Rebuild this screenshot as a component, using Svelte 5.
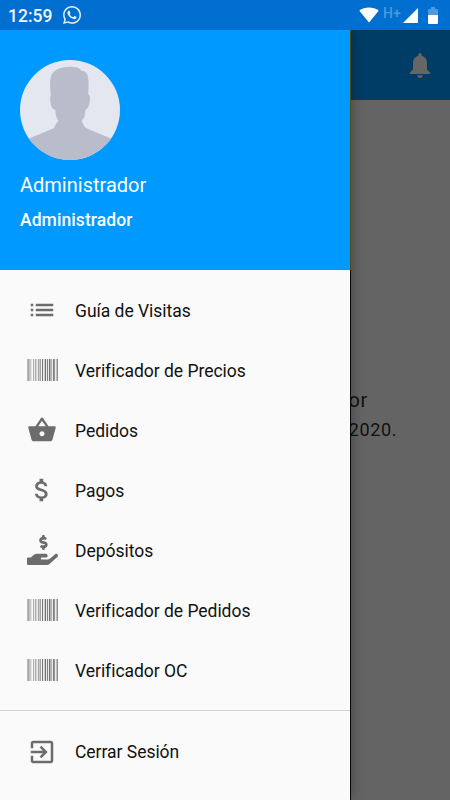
<script lang="ts">
	const items = [
		{ label: 'Guía de Visitas', icon: 'list' },
		{ label: 'Verificador de Precios', icon: 'barcode' },
		{ label: 'Pedidos', icon: 'basket' },
		{ label: 'Pagos', icon: 'money' },
		{ label: 'Depósitos', icon: 'deposit' },
		{ label: 'Verificador de Pedidos', icon: 'barcode' },
		{ label: 'Verificador OC', icon: 'barcode' }
	];

	// opacity of every 1px barcode line, left to right
	const bars = [
		0.45, 0.6, 0.4, 0.35, 0.15, 0, 0.55, 0.1, 0.55, 0.25, 0.1, 0.6, 0.35, 0.6, 0.05, 0.9,
		0.1, 0.3, 0.95, 0.1, 0.85, 0.1, 0.95, 0.5, 0.5, 0.1, 0.85, 0.7, 0.1, 0.4, 0.75
	];
</script>

{#snippet icon(name)}
	{#if name === 'barcode'}
		<svg class="icon" width="31" height="22" viewBox="0 0 31 22" shape-rendering="crispEdges">
			{#each bars as opacity, x}
				<rect {x} y="0" width="1" height="22" {opacity} />
			{/each}
		</svg>
	{:else if name === 'deposit'}
		<svg class="icon" width="31" height="30" viewBox="0 0 544 512" preserveAspectRatio="none">
			<path d="M257.6 144.3l50 14.3c3.6 1 6.1 4.4 6.1 8.1 0 4.6-3.8 8.4-8.4 8.4h-32.8c-3.6 0-7.1-.8-10.3-2.2-4.8-2.2-10.4-1.7-14.1 2l-17.5 17.5c-5.3 5.3-4.7 14.3 1.5 18.4 9.5 6.3 20.4 10.1 31.8 11.5V240c0 8.8 7.2 16 16 16h16c8.8 0 16-7.2 16-16v-17.6c30.3-3.6 53.3-31 49.3-63-2.9-23-20.7-41.3-42.9-47.7l-50-14.3c-3.6-1-6.1-4.4-6.1-8.1 0-4.6 3.8-8.4 8.4-8.4h32.8c3.6 0 7.1.8 10.3 2.2 4.8 2.2 10.4 1.7 14.1-2l17.5-17.5c5.3-5.3 4.7-14.3-1.5-18.4-9.5-6.3-20.4-10.1-31.8-11.5V16c0-8.8-7.2-16-16-16h-16c-8.8 0-16 7.2-16 16v17.6c-30.3 3.6-53.3 31-49.3 63 2.9 23 20.6 41.3 42.9 47.7zm276.3 183.8c-11.2-10.7-28.5-10-40.3 0L406.4 402c-10.7 9.1-24 14-37.8 14H256.9c-8.3 0-15.1-7.2-15.1-16s6.8-16 15.1-16h73.9c15.1 0 29-10.9 31.4-26.6 3.1-20-11.5-37.4-29.8-37.4H181.3c-25.5 0-50.2 9.3-69.9 26.1L67.5 384H15.1C6.8 384 0 391.2 0 400v96c0 8.8 6.8 16 15.1 16H352c13.7 0 27-4.9 37.8-14l142.8-121c14.4-12.1 15.5-35.3 1.3-48.9z" />
		</svg>
	{:else}
		<svg class="icon" width="30" height="30" viewBox="0 0 24 24">
			{#if name === 'list'}
				<path d="M3 13h2v-2H3v2zm0 4h2v-2H3v2zm0-8h2V7H3v2zm4 4h14v-2H7v2zm0 4h14v-2H7v2zM7 7v2h14V7H7z" />
			{:else if name === 'basket'}
				<path d="M17.21 9l-4.38-6.56c-.19-.28-.51-.42-.83-.42-.32 0-.64.14-.83.43L6.79 9H2c-.55 0-1 .45-1 1 0 .09.01.18.04.27l2.54 9.27c.23.84 1 1.46 1.92 1.46h13c.92 0 1.69-.62 1.93-1.46l2.54-9.27L23 10c0-.55-.45-1-1-1h-4.79zM9 9l3-4.4L15 9H9zm3 8c-1.1 0-2-.9-2-2s.9-2 2-2 2 .9 2 2-.9 2-2 2z" />
			{:else if name === 'money'}
				<path d="M11.8 10.9c-2.27-.59-3-1.2-3-2.15 0-1.09 1.01-1.85 2.7-1.85 1.78 0 2.44.85 2.5 2.1h2.21c-.07-1.72-1.12-3.3-3.21-3.81V3h-3v2.16c-1.94.42-3.5 1.68-3.5 3.61 0 2.31 1.91 3.46 4.7 4.13 2.5.6 3 1.48 3 2.41 0 .69-.49 1.79-2.7 1.79-2.06 0-2.87-.92-2.98-2.1h-2.2c.12 2.19 1.76 3.42 3.68 3.83V21h3v-2.15c1.95-.37 3.5-1.5 3.5-3.55 0-2.84-2.43-3.81-4.7-4.4z" />
			{:else if name === 'exit'}
				<path d="M10.09 15.59L11.5 17l5-5-5-5-1.41 1.41L12.67 11H3v2h9.67l-2.58 2.59zM19 3H5c-1.11 0-2 .9-2 2v4h2V5h14v14H5v-4H3v4c0 1.1.89 2 2 2h14c1.1 0 2-.9 2-2V5c0-1.1-.9-2-2-2z" />
			{/if}
		</svg>
	{/if}
{/snippet}

<div class="screen">
	<header class="status-bar">
		<span class="time">12:59</span>
		<svg class="whatsapp" width="18" height="18" viewBox="0 32 448 448">
			<path d="M380.9 97.1C339 55.1 283.2 32 223.9 32c-122.4 0-222 99.6-222 222 0 39.1 10.2 77.3 29.6 111L0 480l117.7-30.9c32.4 17.7 68.9 27 106.1 27h.1c122.3 0 224.1-99.6 224.1-222 0-59.3-25.2-115-67.1-157zm-157 341.6c-33.2 0-65.7-8.9-94-25.7l-6.7-4-69.8 18.3L72 359.2l-4.4-7c-18.5-29.4-28.2-63.3-28.2-98.2 0-101.7 82.8-184.5 184.6-184.5 49.3 0 95.6 19.2 130.4 54.1 34.8 34.9 56.2 81.2 56.1 130.5 0 101.8-84.9 184.6-186.6 184.6zm101.2-138.2c-5.5-2.8-32.8-16.2-37.9-18-5.1-1.9-8.8-2.8-12.5 2.8-3.7 5.6-14.3 18-17.6 21.8-3.2 3.7-6.5 4.2-12 1.4-32.6-16.3-54-29.1-75.5-66-5.7-9.8 5.7-9.1 16.3-30.3 1.8-3.7.9-6.9-.5-9.7-1.4-2.8-12.5-30.1-17.1-41.2-4.5-10.8-9.1-9.3-12.5-9.5-3.2-.2-6.9-.2-10.6-.2-3.7 0-9.7 1.4-14.8 6.9-5.1 5.6-19.4 19-19.4 46.3 0 27.3 19.9 53.7 22.6 57.4 2.8 3.7 39.1 59.7 94.8 83.8 35.2 15.2 49 16.5 66.6 13.9 10.7-1.6 32.8-13.4 37.4-26.4 4.6-13 4.6-24.1 3.2-26.4-1.3-2.5-5-3.9-10.5-6.6z" />
		</svg>
		<div class="signals">
			<svg class="wifi" width="20" height="16" viewBox="0 0 20 16">
				<path d="M.3 3.8C5.5-.5 14.5-.5 19.7 3.8L10 15.6z" />
			</svg>
			<span class="network">H+</span>
			<svg class="cell" width="15" height="15" viewBox="0 0 15 15">
				<path d="M15 0v15H0z" />
			</svg>
			<svg class="battery" width="10" height="17" viewBox="0 0 10 17">
				<path class="dim" d="M3 0h4v2H9q1 0 1 1v5H0V3q0-1 1-1h2z" />
				<path d="M0 8h10v8q0 1-1 1H1q-1 0-1-1z" />
			</svg>
		</div>
	</header>

	<main class="page">
		<div class="toolbar">
			<svg class="bell" width="20" height="25" viewBox="0 0 20 25">
				<path d="M10 0a1.7 1.7 0 0 0-1.7 1.7v1.1C5 3.6 3 6.5 3 10v6.5L0 19.500V21h20v-1.500L17 16.500V10c0-3.500-2-6.400-5.300-7.200V1.700A1.700 1.700 0 0 0 10 0zM7.300 22.300h5.400Q12.400 25 10 25T7.300 22.300z" />
			</svg>
		</div>
		<div class="message">
			<p class="name">Administrador</p>
			<p>2020.</p>
		</div>
	</main>

	<aside class="drawer">
		<div class="profile">
			<svg class="avatar" width="100" height="100" viewBox="0 0 100 100">
				<path d="M50 6.700C56 6.700 59 7.500 61.500 10.800C66 11.500 67.500 14 68 17C69 23 68.500 29 68.200 34Q70.500 35 69.800 40Q69.200 48 66 49.500Q65 50 65 53Q64.700 58 62.500 59.500Q61 61 62 62Q63.500 64 64 66Q65 68 68 69L91 78.500V100H9V78.500L32 69Q34.500 68 35.500 65Q36.500 62.500 38.500 61Q35.500 57 35.300 50Q31.500 49 31 45Q29.500 38 30.800 35C30.500 29 29.500 24 30.500 18C32 10 40 6.700 50 6.700z" />
			</svg>
			<div class="user">Administrador</div>
			<div class="role">Administrador</div>
		</div>
		<nav class="menu">
			{#each items as item}
				<button class="item">
					<span class="icon-box">{@render icon(item.icon)}</span>
					<span class="label">{item.label}</span>
				</button>
			{/each}
		</nav>
		<div class="footer">
			<button class="item">
				<span class="icon-box">{@render icon('exit')}</span>
				<span>Cerrar Sesión</span>
			</button>
		</div>
	</aside>
</div>

<style>
	:global(body) {
		margin: 0;
	}

	.screen {
		position: relative;
		display: flex;
		flex-direction: column;
		width: 450px;
		height: 800px;
		overflow: hidden;
		font-family: Roboto, sans-serif;
		background: #646464;
	}

	.status-bar {
		display: flex;
		align-items: center;
		box-sizing: border-box;
		height: 30px;
		padding: 0 12px 0 8px;
		background: #006fcf;
		color: #eef6ff;
	}

	.time {
		width: 55px;
		font-size: 17.5px;
		font-weight: 500;
		line-height: 30px;
		padding-top: 1px;
	}

	.whatsapp {
		fill: #e3f2ff;
	}

	.signals {
		display: flex;
		align-items: center;
		margin-left: auto;
		fill: #fff;
	}

	.wifi {
		margin-bottom: 1px;
	}

	.network {
		width: 20px;
		margin-left: 4px;
		padding-bottom: 5px;
		color: #4d9adf;
		font-size: 14px;
		font-weight: 500;
		line-height: 14px;
	}

	.cell {
		margin-top: 1px;
	}

	.battery {
		margin-left: 10px;
	}

	.dim {
		fill: #4d9adf;
	}

	.page {
		display: flex;
		flex: 1;
		flex-direction: column;
	}

	.toolbar {
		display: flex;
		align-items: center;
		justify-content: flex-end;
		height: 70px;
		padding-right: 20px;
		background: #003d66;
	}

	.bell {
		fill: #666;
	}

	.message {
		padding: 285px 53px 0 0;
		color: #111;
		font-size: 18px;
		line-height: 30px;
		letter-spacing: 0.6px;
		text-align: right;
	}

	.message p {
		margin: 0;
	}

	.message .name {
		padding-right: 29px;
		font-size: 20px;
	}

	.drawer {
		position: absolute;
		top: 30px;
		bottom: 0;
		left: 0;
		display: flex;
		flex-direction: column;
		width: 350px;
		background: #fafafa;
		box-shadow: 1px 0 0 #080808, 2px 0 12px rgba(0, 0, 0, 0.3);
		clip-path: inset(0 -20px 0 0);
	}

	.profile {
		box-sizing: border-box;
		height: 240px;
		padding: 30px 20px 0;
		background: #0099ff;
		box-shadow: 1px 70px 0 -70px #080808, 1px 0 0 #5c4a10;
		color: #fff;
	}

	.avatar {
		display: block;
		border-radius: 50%;
		background: #e4e7f0;
		fill: #b8bccb;
	}

	.user {
		margin-top: 10px;
		font-size: 20px;
		line-height: 30px;
	}

	.role {
		margin-top: 5px;
		font-size: 17.5px;
		font-weight: 500;
		line-height: 30px;
		letter-spacing: 0.08px;
	}

	.menu {
		flex: 1;
		padding-top: 10px;
	}

	.item {
		display: flex;
		align-items: center;
		width: 100%;
		height: 60px;
		padding: 0 0 0 27px;
		border: none;
		background: none;
		color: #111;
		font-family: inherit;
		font-size: 17.5px;
		letter-spacing: -0.03px;
		text-align: left;
		cursor: pointer;
	}

	.label {
		padding-top: 2px;
	}

	.icon-box {
		display: flex;
		align-items: center;
		width: 48px;
	}

	.icon {
		fill: #6c6c6c;
	}

	.footer {
		height: 78px;
		padding-top: 11px;
		border-top: 1px solid #d2d2d2;
	}
</style>
